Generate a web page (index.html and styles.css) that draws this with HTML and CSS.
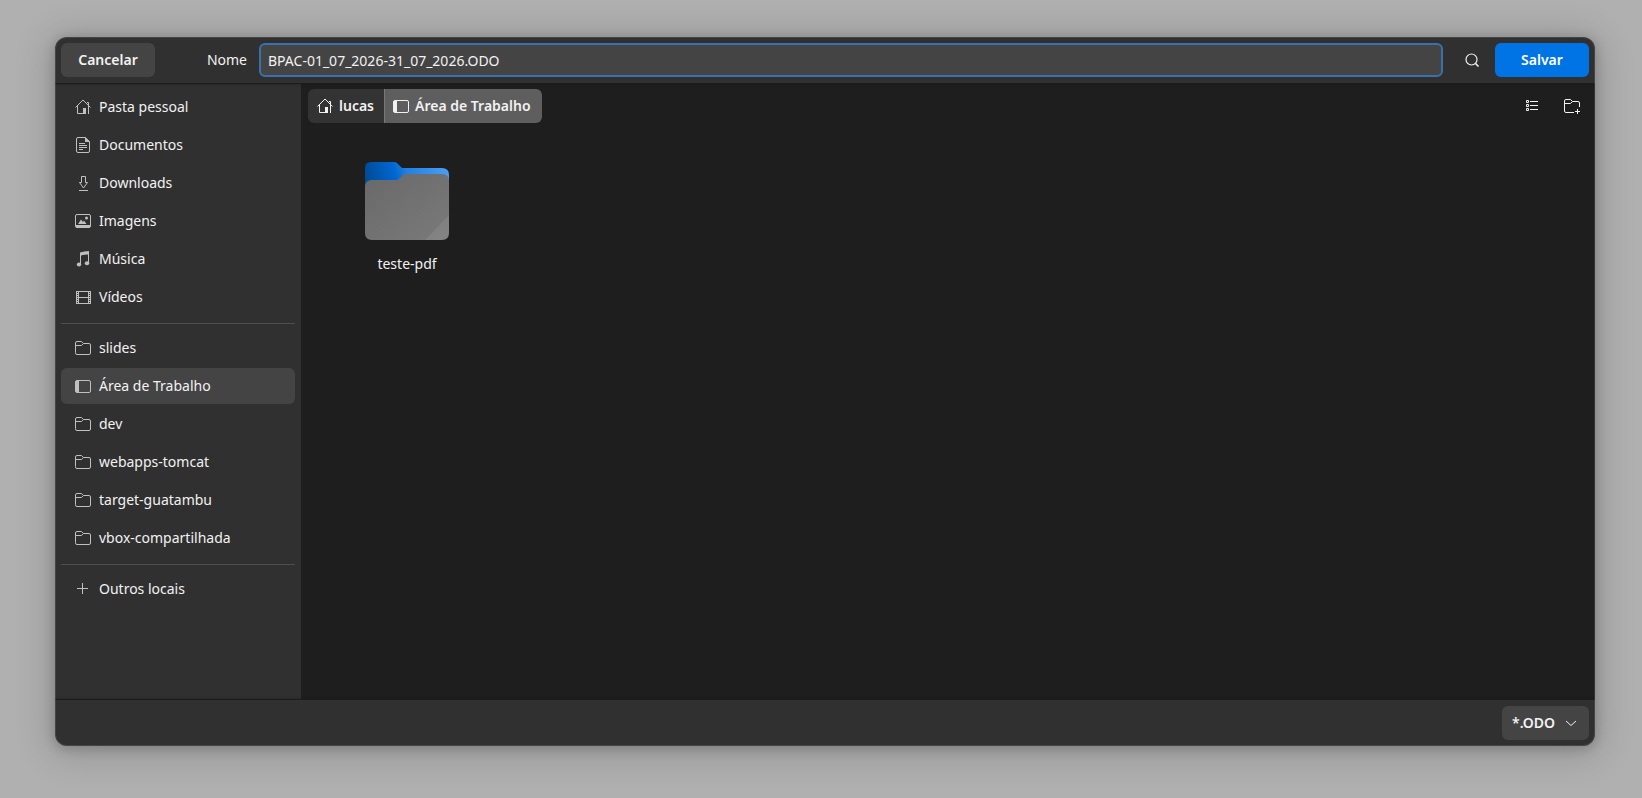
FILE: index.html
```
<!DOCTYPE html>
<html lang="pt-BR">
  <head>
    <meta charset="UTF-8" />
    <meta name="viewport" content="width=device-width, initial-scale=1.0" />
    <title>Salvar arquivo</title>
    <link rel="stylesheet" href="styles.css">
  </head>
  <body>
    <svg class="sprite" aria-hidden="true">
      <symbol id="home" viewBox="0 0 16 16">
        <path d="M.5 8.500 8 1l7.500 7.500M2.500 7v7.500h6M13.500 7v8M12 3.500h1.500v2.500" fill="none" stroke="currentColor" />
        <path d="M8 9h3v6H8z" fill="currentColor" />
      </symbol>
      <symbol id="document" viewBox="0 0 16 16">
        <path d="M3 .5h7.500l4 4V14a1.500 1.500 0 0 1-1.500 1.500H3A1.500 1.500 0 0 1 1.500 14V2A1.500 1.500 0 0 1 3 .5zM4 6.500h6M4 8.500h8M4 10.500h8M4 12.500h4" fill="none" stroke="currentColor" />
        <path d="M10 0v5h5z" fill="currentColor" />
      </symbol>
      <symbol id="download" viewBox="0 0 16 16">
        <path d="M6.500 1.500h4v6h2l-4 5.500-4-5.500h2zM4 15.500h9" fill="none" stroke="currentColor" />
      </symbol>
      <symbol id="image" viewBox="0 0 16 16">
        <rect x=".5" y="1.500" width="15" height="13" rx="1.500" fill="none" stroke="currentColor" />
        <path d="M1 12h14v2.500H1zM3 11l3-4.500L8 9l1-1.500 2.500 3.500z" fill="currentColor" />
        <circle cx="11.500" cy="5" r="1.500" fill="currentColor" />
      </symbol>
      <symbol id="music" viewBox="0 0 16 16">
        <path d="M5 1.500Q9 .3 14 0v12h-1V3.500Q9 3.700 6 4.500V14H5z" fill="currentColor" />
        <ellipse cx="4" cy="13.500" rx="2.200" ry="2" fill="currentColor" />
        <ellipse cx="12" cy="12.300" rx="2.200" ry="2" fill="currentColor" />
      </symbol>
      <symbol id="video" viewBox="0 0 16 16">
        <path d="M3.500 2v13M13.500 2v13M3 2.500h11M3 8.500h11M3 14.500h11" fill="none" stroke="currentColor" />
        <path d="M1.500 2v13M15.500 2v13" stroke="currentColor" fill="none" />
        <path d="M2.500 2v13M14.500 2v13" stroke="currentColor" stroke-dasharray="1 1" fill="none" />
      </symbol>
      <symbol id="folder" viewBox="0 0 16 16">
        <path d="M.5 12.500V3A1.500 1.500 0 0 1 2 1.500h4.500l2 2H14A1.500 1.500 0 0 1 15.500 5v8a1.500 1.500 0 0 1-1.500 1.500H2A1.500 1.500 0 0 1 .5 13zM.5 6V5.500h6l2-2" fill="none" stroke="currentColor" />
      </symbol>
      <symbol id="desktop" viewBox="0 0 16 16">
        <rect x=".5" y="2.500" width="15" height="12" rx="1.500" fill="none" stroke="currentColor" />
        <path d="M1 3h3v11H1z" fill="currentColor" />
      </symbol>
      <symbol id="plus" viewBox="0 0 16 16">
        <path d="M2 7.500h11M7.500 2v11" fill="none" stroke="currentColor" />
      </symbol>
      <symbol id="search" viewBox="0 0 16 16">
        <circle cx="7.500" cy="7.500" r="5.500" fill="none" stroke="currentColor" stroke-width="1.200" />
        <path d="m11.500 11.500 3 3" stroke="currentColor" stroke-width="1.600" />
      </symbol>
      <symbol id="list" viewBox="0 0 16 16">
        <path d="M2.500 2.500h2v2h-2zM2.500 6.500h2v2h-2zM2.500 10.500h2v2h-2zM6 3.500h8M6 7.500h8M6 11.500h8" fill="none" stroke="currentColor" />
      </symbol>
      <symbol id="new-folder" viewBox="0 0 16 16">
        <path d="M10 14.500H2A1.500 1.500 0 0 1 .5 13V3A1.500 1.500 0 0 1 2 1.500h4.500l2 2H14A1.500 1.500 0 0 1 15.500 5v4M.5 5.500h6l2-2M11 13.500h5M13.500 11v5" fill="none" stroke="currentColor" />
      </symbol>
      <symbol id="chevron" viewBox="0 0 16 16">
        <path d="m3 6 5 4.500L13 6" fill="none" stroke="currentColor" />
      </symbol>
    </svg>

    <main class="dialog">
      <header class="header">
        <button class="btn" type="button">Cancelar</button>
        <label class="name-label" for="name">Nome</label>
        <input class="name-input" id="name" type="text" value="BPAC-01_07_2026-31_07_2026.ODO" />
        <button class="icon-btn" type="button" aria-label="Pesquisar"><svg class="icon"><use href="#search" /></svg></button>
        <button class="btn btn-primary" type="button">Salvar</button>
      </header>

      <div class="content">
        <nav class="sidebar">
          <a class="place" href="#"><svg class="icon"><use href="#home" /></svg>Pasta pessoal</a>
          <a class="place" href="#"><svg class="icon"><use href="#document" /></svg>Documentos</a>
          <a class="place" href="#"><svg class="icon"><use href="#download" /></svg>Downloads</a>
          <a class="place" href="#"><svg class="icon"><use href="#image" /></svg>Imagens</a>
          <a class="place" href="#"><svg class="icon"><use href="#music" /></svg>Música</a>
          <a class="place" href="#"><svg class="icon"><use href="#video" /></svg>Vídeos</a>
          <hr class="separator" />
          <a class="place" href="#"><svg class="icon"><use href="#folder" /></svg>slides</a>
          <a class="place active" href="#"><svg class="icon"><use href="#desktop" /></svg>Área de Trabalho</a>
          <a class="place" href="#"><svg class="icon"><use href="#folder" /></svg>dev</a>
          <a class="place" href="#"><svg class="icon"><use href="#folder" /></svg>webapps-tomcat</a>
          <a class="place" href="#"><svg class="icon"><use href="#folder" /></svg>target-guatambu</a>
          <a class="place" href="#"><svg class="icon"><use href="#folder" /></svg>vbox-compartilhada</a>
          <hr class="separator" />
          <a class="place" href="#"><svg class="icon"><use href="#plus" /></svg>Outros locais</a>
        </nav>

        <section class="browser">
          <div class="toolbar">
            <div class="path">
              <button class="crumb" type="button"><svg class="icon"><use href="#home" /></svg>lucas</button>
              <button class="crumb current" type="button"><svg class="icon"><use href="#desktop" /></svg>Área de Trabalho</button>
            </div>
            <div class="tools">
              <button class="icon-btn" type="button" aria-label="Ver em lista"><svg class="icon"><use href="#list" /></svg></button>
              <button class="icon-btn" type="button" aria-label="Criar pasta"><svg class="icon"><use href="#new-folder" /></svg></button>
            </div>
          </div>
          <div class="files">
            <a class="file" href="#">
              <svg class="folder-icon" viewBox="0 0 96 96">
                <defs>
                  <linearGradient id="back" gradientUnits="userSpaceOnUse" x1="8" y1="32" x2="90" y2="12">
                    <stop offset="0" stop-color="#004a94" />
                    <stop offset=".35" stop-color="#0067d0" />
                    <stop offset=".5" stop-color="#2280e2" />
                    <stop offset="1" stop-color="#4d9ff5" />
                  </linearGradient>
                  <linearGradient id="front" x1="0" y1="0" x2="1" y2="1">
                    <stop offset="0" stop-color="#696969" />
                    <stop offset="1" stop-color="#7a7a7a" />
                  </linearGradient>
                </defs>
                <path d="M6 34V15q0-6 6-6h23q2 0 3 1l5 5h40q7 0 7 7v12z" fill="url(#back)" />
                <path d="M6 34q0-7 7-7h24q2 0 3-1l4-4q1-1 3-1h36q7 0 7 7v52q0 7-7 7H13q-7 0-7-7z" fill="url(#front)" />
                <path d="M90 62v18q0 7-7 7H66z" fill="#fff" opacity=".08" />
              </svg>
              <span>teste-pdf</span>
            </a>
          </div>
        </section>
      </div>

      <footer class="footer">
        <div class="filter">
          <select class="filter-select" aria-label="Tipo de arquivo">
            <option>*.ODO</option>
          </select>
          <svg class="icon filter-arrow"><use href="#chevron" /></svg>
        </div>
      </footer>
    </main>
  </body>
</html>
```

FILE: styles.css
```
* {
  margin: 0;
  padding: 0;
  box-sizing: border-box;
}
body {
  display: flex;
  min-height: 100vh;
  padding: 37px 47px 52px 55px;
  background: #b0b0b0;
  color: #f2f2f2;
  font-family: "Noto Sans", "Open Sans", sans-serif;
  font-size: 14px;
  line-height: 20px;
}
button,
input,
select {
  font: inherit;
  color: inherit;
  border: none;
}
a {
  color: inherit;
  text-decoration: none;
}
.sprite {
  position: absolute;
  width: 0;
  height: 0;
}
.icon {
  width: 16px;
  height: 16px;
  flex: none;
}
.dialog {
  position: relative;
  flex: 1;
  min-width: 0;
  display: flex;
  flex-direction: column;
  background: #303030;
  border-radius: 12px;
  overflow: hidden;
  box-shadow: 0 2px 12px 1px rgba(0, 0, 0, 0.18), 0 4px 36px 6px rgba(0, 0, 0, 0.16);
}
/* thin highlight around the window edge */
.dialog::after {
  content: "";
  position: absolute;
  inset: 0;
  border: 1px solid rgba(255, 255, 255, 0.1);
  border-radius: 12px;
  pointer-events: none;
}

.header {
  position: relative;
  display: flex;
  align-items: center;
  padding: 6px;
  box-shadow: 0 1px #1c1c1c, 0 2px 2px rgba(0, 0, 0, 0.15);
}
.btn {
  min-width: 94px;
  height: 34px;
  background: #444;
  border-radius: 6px;
  font-weight: 600;
}
.btn-primary {
  margin-left: 6px;
  background: #0073e5;
  color: #fff;
}
.name-label {
  width: 104px;
  padding-right: 12px;
  text-align: right;
}
.name-input {
  flex: 1;
  min-width: 0;
  height: 34px;
  margin-right: 12px;
  padding: 0 7px;
  background: #444;
  border: 2px solid #3a71ab;
  border-radius: 6px;
  outline: none;
}
.icon-btn {
  display: flex;
  align-items: center;
  justify-content: center;
  width: 34px;
  height: 34px;
  background: none;
  border-radius: 6px;
}

.content {
  flex: 1;
  display: flex;
}
.sidebar {
  width: 246px;
  flex: none;
  display: flex;
  flex-direction: column;
  gap: 2px;
  padding: 6px;
}
.place {
  display: flex;
  align-items: center;
  gap: 8px;
  height: 36px;
  padding: 0 14px;
  border-radius: 6px;
}
.place .icon {
  color: #c0c0c0;
}
.place.active {
  background: #444;
}
.separator {
  height: 1px;
  margin: 6px 0 4px;
  border: none;
  background: #4f4f4f;
}

.browser {
  flex: 1;
  min-width: 0;
  background: #1e1e1e;
}
.toolbar {
  display: flex;
  justify-content: space-between;
  padding: 6px 6px 6px 7px;
}
.path {
  display: flex;
  border-radius: 6px;
  overflow: hidden;
}
.crumb {
  display: flex;
  align-items: center;
  gap: 6px;
  height: 34px;
  padding: 0 10px 0 9px;
  background: #333;
  font-weight: 600;
}
.crumb.current {
  padding: 0 11px 0 8px;
  background: #5e5e5e;
  border-left: 1px solid #787878;
}
.tools {
  display: flex;
  gap: 6px;
}
.files {
  display: flex;
  flex-wrap: wrap;
  padding: 24px 36px;
}
.file {
  display: flex;
  flex-direction: column;
  align-items: center;
  gap: 5px;
  width: 140px;
}
.folder-icon {
  width: 96px;
  height: 96px;
}

.footer {
  position: relative;
  display: flex;
  justify-content: flex-end;
  padding: 6px;
  box-shadow: 0 -1px #1c1c1c, 0 -2px 2px rgba(0, 0, 0, 0.15);
}
.filter {
  position: relative;
}
.filter-select {
  appearance: none;
  width: 87px;
  height: 34px;
  padding: 0 30px 0 10px;
  background: #444;
  border-radius: 6px;
  font-weight: 600;
}
.filter-arrow {
  position: absolute;
  right: 10px;
  top: 9px;
  pointer-events: none;
}
```
